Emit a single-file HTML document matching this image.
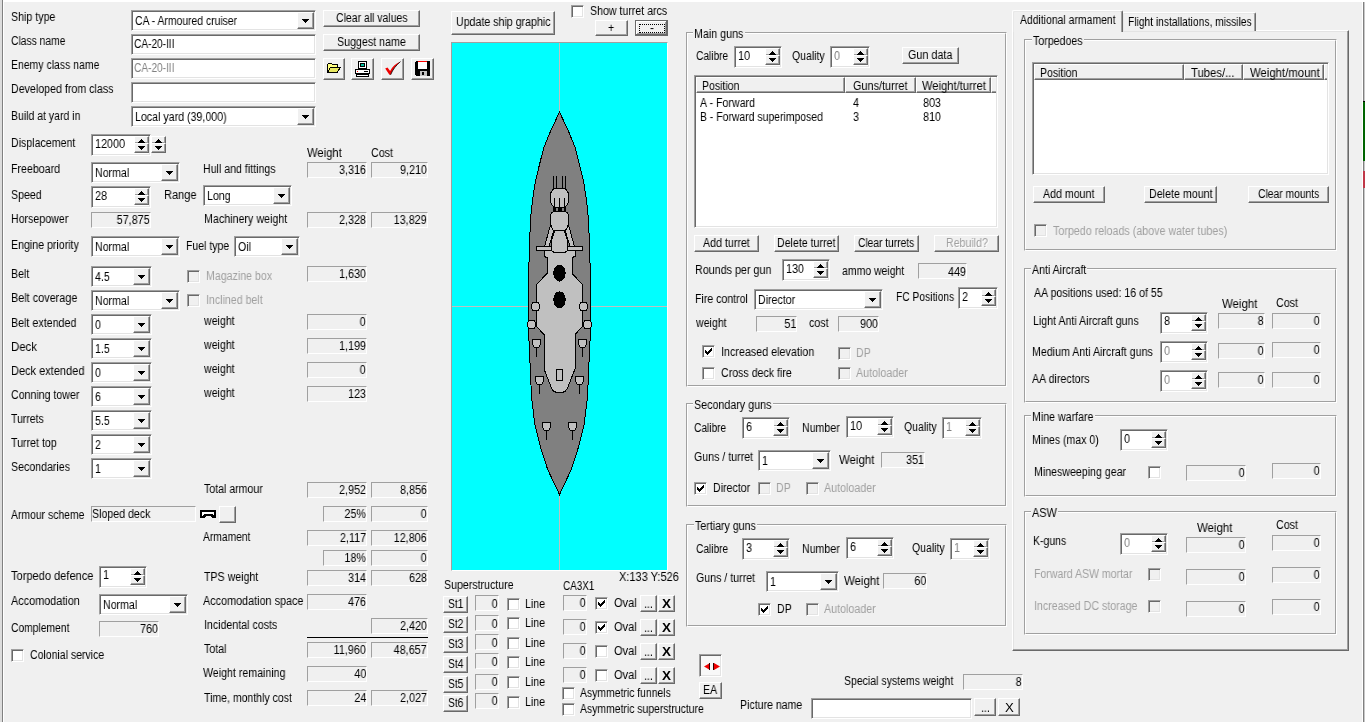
<!DOCTYPE html>
<html lang="en"><head><meta charset="utf-8"><title>Ship design</title><style>
html,body{margin:0;padding:0}
body{width:1365px;height:722px;overflow:hidden;background:#f0f0f0;position:relative;font:12px/12px "Liberation Sans",sans-serif;color:#000}
.t{position:absolute;z-index:3;will-change:transform;white-space:pre;font:12px/12px "Liberation Sans",sans-serif;height:12px}
.sk{position:absolute;border:1px solid;border-color:#a0a0a0 #fff #fff #a0a0a0;background:#f0f0f0;box-sizing:content-box}
.ed{position:absolute;border:1px solid;border-color:#a0a0a0 #fff #fff #a0a0a0;background:#fff;box-shadow:inset 1px 1px 0 #696969,inset -1px -1px 0 #e3e3e3}
.bt{position:absolute;border:1px solid;border-color:#fff #696969 #696969 #fff;background:#f0f0f0;box-shadow:inset -1px -1px 0 #a0a0a0}
.bf{outline:1px solid #696969;outline-offset:-1px;box-shadow:inset -1px -1px 0 #696969,inset 1px 1px 0 #fff,inset -2px -2px 0 #a0a0a0;border-color:#696969}
.dot{position:absolute;border:1px dotted #000}
.ic{position:absolute;display:block;line-height:0}
.gb{position:absolute;border:1px solid;border-color:#a0a0a0 #fff #fff #a0a0a0}
.gb>div{position:absolute;left:0;top:0;right:0;bottom:0;border:1px solid;border-color:#fff #a0a0a0 #a0a0a0 #fff}
.gl{position:absolute;background:#f0f0f0}
.tabpanel{position:absolute;border:1px solid;border-color:#fff #696969 #696969 #fff;box-shadow:inset -1px -1px 0 #a0a0a0,inset 1px 1px 0 #e3e3e3;background:#f0f0f0}
.tab{position:absolute;border:1px solid;border-color:#fff #696969 transparent #fff;border-bottom:0;box-shadow:inset -1px 0 0 #a0a0a0,inset 1px 1px 0 #e8e8e8;background:#f0f0f0;border-radius:2px 2px 0 0}
.tabsel{z-index:2}
</style></head>
<body>
<div style="position:absolute;left:0;top:0;width:1365px;height:2px;background:#fff"></div>
<div style="position:absolute;left:0;top:0;width:2px;height:722px;background:#dcdcdc"></div>
<div style="position:absolute;left:2px;top:0;width:1px;height:722px;background:#808080"></div>
<div style="position:absolute;left:3px;top:0;width:1px;height:722px;background:#fff"></div>
<div style="position:absolute;left:1362px;top:2px;width:1px;height:720px;background:#fff"></div>
<div style="position:absolute;left:1363px;top:2px;width:1px;height:720px;background:#808080"></div>
<div style="position:absolute;left:1364px;top:2px;width:1px;height:720px;background:#c8c8c8"></div>
<div style="position:absolute;left:1363px;top:101px;width:2px;height:60px;background:#006400;border-top:1px solid #000;box-sizing:border-box"></div>
<div style="position:absolute;left:1363px;top:171px;width:2px;height:17px;background:#c03848"></div>
<div class="t" style="top:11px;transform:scaleX(0.8877);left:11.4px;transform-origin:0 0;">Ship type</div>
<div class="t" style="top:35px;transform:scaleX(0.8586);left:11.4px;transform-origin:0 0;">Class name</div>
<div class="t" style="top:59px;transform:scaleX(0.8721);left:11.4px;transform-origin:0 0;">Enemy class name</div>
<div class="t" style="top:83px;transform:scaleX(0.8875);left:11.4px;transform-origin:0 0;">Developed from class</div>
<div class="t" style="top:110px;transform:scaleX(0.8745);left:11.4px;transform-origin:0 0;">Build at yard in</div>
<div class="ed" style="left:131px;top:10px;width:183px;height:19px"></div>
<div class="bt" style="left:297px;top:12px;width:15px;height:15px"></div>
<div class="ic" style="left:302px;top:19px"><svg width="7" height="4" viewBox="0 0 7 4" shape-rendering="crispEdges"><path d="M0 0h7v1h-1v1h-1v1h-1v1h-1v-1h-1v-1h-1v-1h-1z" fill="#000"/></svg></div>
<div class="t" style="top:15px;transform:scaleX(0.8649);left:135.2px;transform-origin:0 0;">CA - Armoured cruiser</div>
<div class="ed" style="left:131px;top:34px;width:183px;height:19px"></div>
<div class="t" style="top:38px;transform:scaleX(0.8417);left:134.4px;transform-origin:0 0;">CA-20-III</div>
<div class="ed" style="left:131px;top:58px;width:183px;height:19px"></div>
<div class="t" style="top:62px;transform:scaleX(0.8417);left:134.4px;transform-origin:0 0;color:#808080;">CA-20-III</div>
<div class="ed" style="left:131px;top:82px;width:183px;height:19px"></div>
<div class="ed" style="left:131px;top:106px;width:183px;height:19px"></div>
<div class="bt" style="left:297px;top:108px;width:15px;height:15px"></div>
<div class="ic" style="left:302px;top:115px"><svg width="7" height="4" viewBox="0 0 7 4" shape-rendering="crispEdges"><path d="M0 0h7v1h-1v1h-1v1h-1v1h-1v-1h-1v-1h-1v-1h-1z" fill="#000"/></svg></div>
<div class="t" style="top:111px;transform:scaleX(0.8861);left:135.2px;transform-origin:0 0;">Local yard (39,000)</div>
<div class="bt" style="left:323px;top:10px;width:95px;height:15px"></div>
<div class="t" style="top:12px;transform:scaleX(0.8727);left:335.7px;transform-origin:0 0;">Clear all values</div>
<div class="bt" style="left:323px;top:34px;width:95px;height:15px"></div>
<div class="t" style="top:36px;transform:scaleX(0.8894);left:337.1px;transform-origin:0 0;">Suggest name</div>
<div class="bt" style="left:323px;top:58px;width:20px;height:20px"></div>
<div class="bt" style="left:351px;top:58px;width:21px;height:20px"></div>
<div class="bt" style="left:381px;top:58px;width:21px;height:20px"></div>
<div class="bt" style="left:411px;top:58px;width:21px;height:20px"></div>
<svg class="ic" style="left:325px;top:62px" width="17" height="13" viewBox="0 0 17 13" shape-rendering="crispEdges">
<path d="M2.5 10.5v-8l1-1h3l1 1h4.5v2" fill="#ffff80" stroke="#000"/>
<path d="M2.5 10.5l3-5h10l-3.5 5z" fill="#e8e860" stroke="#000"/></svg>
<svg class="ic" style="left:354px;top:60px" width="18" height="18" viewBox="0 0 18 18" shape-rendering="crispEdges">
<rect x="4.5" y="1.5" width="8" height="7" fill="#fff" stroke="#000"/><rect x="6" y="3" width="5" height="4" fill="#000"/><rect x="7" y="4" width="3" height="2" fill="#00c0a0"/>
<rect x="1.5" y="9.500" width="14" height="4" fill="#fff" stroke="#000"/><rect x="3" y="11" width="1" height="1" fill="#f00"/><rect x="10" y="11" width="4" height="1" fill="#000"/>
<rect x="2.5" y="14.500" width="12" height="2" fill="#fff" stroke="#000"/></svg>
<svg class="ic" style="left:384px;top:61px" width="18" height="15" viewBox="0 0 18 15">
<path d="M1.2 7.4l2.3-.9 2.6 3.4C8.600 5.600 11.800 2.600 16.500 .6 12 4.400 8.800 8.400 6.600 13.800l-1.200 0z" fill="#f00000"/><path d="M6.600 13.800C8.800 8.400 12 4.400 16.500 .6" stroke="#000" stroke-width=".8" fill="none"/></svg>
<svg class="ic" style="left:415px;top:61px" width="15" height="15" viewBox="0 0 15 15" shape-rendering="crispEdges">
<path d="M1 0h13l1 1v13l-1 1h-13l-1-1v-13z" fill="#000"/><rect x="3" y="0" width="9" height="8" fill="#fff"/><rect x="3" y="0" width="9" height="1" fill="#f00"/>
<rect x="5" y="10" width="7" height="5" fill="#c0c0c0"/><rect x="7" y="11" width="2" height="3" fill="#000"/></svg>
<div class="t" style="top:137px;transform:scaleX(0.8850);left:11.4px;transform-origin:0 0;">Displacement</div>
<div class="ed" style="left:91px;top:134px;width:58px;height:20px"></div>
<div class="bt" style="left:134px;top:136px;width:13px;height:6px"></div>
<div class="bt" style="left:134px;top:143px;width:13px;height:8px"></div>
<div class="ic" style="left:138px;top:139px"><svg width="7" height="4" viewBox="0 0 7 4" shape-rendering="crispEdges"><path d="M3 0h1v1h1v1h1v1h1v1h-7v-1h1v-1h1v-1h1z" fill="#000"/></svg></div>
<div class="ic" style="left:138px;top:146px"><svg width="7" height="4" viewBox="0 0 7 4" shape-rendering="crispEdges"><path d="M0 0h7v1h-1v1h-1v1h-1v1h-1v-1h-1v-1h-1v-1h-1z" fill="#000"/></svg></div>
<div class="t" style="top:138px;transform:scaleX(0.9000);left:95px;transform-origin:0 0;">12000</div>
<div class="bt" style="left:151px;top:136px;width:13px;height:6px"></div>
<div class="bt" style="left:151px;top:143px;width:13px;height:8px"></div>
<div class="ic" style="left:155px;top:139px"><svg width="7" height="4" viewBox="0 0 7 4" shape-rendering="crispEdges"><path d="M3 0h1v1h1v1h1v1h1v1h-7v-1h1v-1h1v-1h1z" fill="#000"/></svg></div>
<div class="ic" style="left:155px;top:146px"><svg width="7" height="4" viewBox="0 0 7 4" shape-rendering="crispEdges"><path d="M0 0h7v1h-1v1h-1v1h-1v1h-1v-1h-1v-1h-1v-1h-1z" fill="#000"/></svg></div>
<div class="t" style="top:163px;transform:scaleX(0.8850);left:11.4px;transform-origin:0 0;">Freeboard</div>
<div class="ed" style="left:91px;top:162px;width:87px;height:19px"></div>
<div class="bt" style="left:161px;top:164px;width:15px;height:15px"></div>
<div class="ic" style="left:166px;top:171px"><svg width="7" height="4" viewBox="0 0 7 4" shape-rendering="crispEdges"><path d="M0 0h7v1h-1v1h-1v1h-1v1h-1v-1h-1v-1h-1v-1h-1z" fill="#000"/></svg></div>
<div class="t" style="top:167px;transform:scaleX(0.8850);left:95px;transform-origin:0 0;">Normal</div>
<div class="t" style="top:163px;transform:scaleX(0.8850);left:203.4px;transform-origin:0 0;">Hull and fittings</div>
<div class="t" style="top:147px;transform:scaleX(0.9374);left:307.4px;transform-origin:0 0;">Weight</div>
<div class="t" style="top:147px;transform:scaleX(0.8917);left:371.4px;transform-origin:0 0;">Cost</div>
<div class="sk" style="left:307px;top:162px;width:58px;height:14px"></div>
<div class="t" style="top:164px;transform:scaleX(0.9000);right:999px;transform-origin:100% 0;">3,316</div>
<div class="sk" style="left:371px;top:162px;width:55px;height:14px"></div>
<div class="t" style="top:164px;transform:scaleX(0.9000);right:938px;transform-origin:100% 0;">9,210</div>
<div class="t" style="top:189px;transform:scaleX(0.8850);left:11.4px;transform-origin:0 0;">Speed</div>
<div class="ed" style="left:91px;top:186px;width:58px;height:20px"></div>
<div class="bt" style="left:134px;top:188px;width:13px;height:6px"></div>
<div class="bt" style="left:134px;top:195px;width:13px;height:8px"></div>
<div class="ic" style="left:138px;top:191px"><svg width="7" height="4" viewBox="0 0 7 4" shape-rendering="crispEdges"><path d="M3 0h1v1h1v1h1v1h1v1h-7v-1h1v-1h1v-1h1z" fill="#000"/></svg></div>
<div class="ic" style="left:138px;top:198px"><svg width="7" height="4" viewBox="0 0 7 4" shape-rendering="crispEdges"><path d="M0 0h7v1h-1v1h-1v1h-1v1h-1v-1h-1v-1h-1v-1h-1z" fill="#000"/></svg></div>
<div class="t" style="top:190px;transform:scaleX(0.9000);left:95px;transform-origin:0 0;">28</div>
<div class="t" style="top:189px;transform:scaleX(0.9191);left:163.6px;transform-origin:0 0;">Range</div>
<div class="ed" style="left:203px;top:185px;width:87px;height:19px"></div>
<div class="bt" style="left:273px;top:187px;width:15px;height:15px"></div>
<div class="ic" style="left:278px;top:194px"><svg width="7" height="4" viewBox="0 0 7 4" shape-rendering="crispEdges"><path d="M0 0h7v1h-1v1h-1v1h-1v1h-1v-1h-1v-1h-1v-1h-1z" fill="#000"/></svg></div>
<div class="t" style="top:190px;transform:scaleX(0.8850);left:207px;transform-origin:0 0;">Long</div>
<div class="t" style="top:213px;transform:scaleX(0.8850);left:11.4px;transform-origin:0 0;">Horsepower</div>
<div class="sk" style="left:91px;top:212px;width:58px;height:14px"></div>
<div class="t" style="top:214px;transform:scaleX(0.9000);right:1215px;transform-origin:100% 0;">57,875</div>
<div class="t" style="top:213px;transform:scaleX(0.8921);left:203.7px;transform-origin:0 0;">Machinery weight</div>
<div class="sk" style="left:307px;top:212px;width:58px;height:14px"></div>
<div class="t" style="top:214px;transform:scaleX(0.9000);right:999px;transform-origin:100% 0;">2,328</div>
<div class="sk" style="left:371px;top:212px;width:55px;height:14px"></div>
<div class="t" style="top:214px;transform:scaleX(0.9000);right:938px;transform-origin:100% 0;">13,829</div>
<div class="t" style="top:239px;transform:scaleX(0.8850);left:11.4px;transform-origin:0 0;">Engine priority</div>
<div class="ed" style="left:91px;top:236px;width:87px;height:19px"></div>
<div class="bt" style="left:161px;top:238px;width:15px;height:15px"></div>
<div class="ic" style="left:166px;top:245px"><svg width="7" height="4" viewBox="0 0 7 4" shape-rendering="crispEdges"><path d="M0 0h7v1h-1v1h-1v1h-1v1h-1v-1h-1v-1h-1v-1h-1z" fill="#000"/></svg></div>
<div class="t" style="top:241px;transform:scaleX(0.8850);left:95px;transform-origin:0 0;">Normal</div>
<div class="t" style="top:240px;transform:scaleX(0.8735);left:186.4px;transform-origin:0 0;">Fuel type</div>
<div class="ed" style="left:234px;top:236px;width:64px;height:19px"></div>
<div class="bt" style="left:281px;top:238px;width:15px;height:15px"></div>
<div class="ic" style="left:286px;top:245px"><svg width="7" height="4" viewBox="0 0 7 4" shape-rendering="crispEdges"><path d="M0 0h7v1h-1v1h-1v1h-1v1h-1v-1h-1v-1h-1v-1h-1z" fill="#000"/></svg></div>
<div class="t" style="top:241px;transform:scaleX(0.8850);left:238px;transform-origin:0 0;">Oil</div>
<div class="t" style="top:268px;transform:scaleX(0.8850);left:11.4px;transform-origin:0 0;">Belt</div>
<div class="ed" style="left:91px;top:266px;width:59px;height:19px"></div>
<div class="bt" style="left:133px;top:268px;width:15px;height:15px"></div>
<div class="ic" style="left:138px;top:275px"><svg width="7" height="4" viewBox="0 0 7 4" shape-rendering="crispEdges"><path d="M0 0h7v1h-1v1h-1v1h-1v1h-1v-1h-1v-1h-1v-1h-1z" fill="#000"/></svg></div>
<div class="t" style="top:271px;transform:scaleX(0.8850);left:95px;transform-origin:0 0;">4.5</div>
<div class="t" style="top:292px;transform:scaleX(0.9051);left:11.4px;transform-origin:0 0;">Belt coverage</div>
<div class="ed" style="left:91px;top:290px;width:87px;height:19px"></div>
<div class="bt" style="left:161px;top:292px;width:15px;height:15px"></div>
<div class="ic" style="left:166px;top:299px"><svg width="7" height="4" viewBox="0 0 7 4" shape-rendering="crispEdges"><path d="M0 0h7v1h-1v1h-1v1h-1v1h-1v-1h-1v-1h-1v-1h-1z" fill="#000"/></svg></div>
<div class="t" style="top:295px;transform:scaleX(0.8850);left:95px;transform-origin:0 0;">Normal</div>
<div class="t" style="top:317px;transform:scaleX(0.8915);left:11.4px;transform-origin:0 0;">Belt extended</div>
<div class="ed" style="left:91px;top:314px;width:59px;height:19px"></div>
<div class="bt" style="left:133px;top:316px;width:15px;height:15px"></div>
<div class="ic" style="left:138px;top:323px"><svg width="7" height="4" viewBox="0 0 7 4" shape-rendering="crispEdges"><path d="M0 0h7v1h-1v1h-1v1h-1v1h-1v-1h-1v-1h-1v-1h-1z" fill="#000"/></svg></div>
<div class="t" style="top:319px;transform:scaleX(0.8850);left:95px;transform-origin:0 0;">0</div>
<div class="t" style="top:341px;transform:scaleX(0.9509);left:11.4px;transform-origin:0 0;">Deck</div>
<div class="ed" style="left:91px;top:338px;width:59px;height:19px"></div>
<div class="bt" style="left:133px;top:340px;width:15px;height:15px"></div>
<div class="ic" style="left:138px;top:347px"><svg width="7" height="4" viewBox="0 0 7 4" shape-rendering="crispEdges"><path d="M0 0h7v1h-1v1h-1v1h-1v1h-1v-1h-1v-1h-1v-1h-1z" fill="#000"/></svg></div>
<div class="t" style="top:343px;transform:scaleX(0.8850);left:95px;transform-origin:0 0;">1.5</div>
<div class="t" style="top:365px;transform:scaleX(0.9171);left:11.4px;transform-origin:0 0;">Deck extended</div>
<div class="ed" style="left:91px;top:362px;width:59px;height:19px"></div>
<div class="bt" style="left:133px;top:364px;width:15px;height:15px"></div>
<div class="ic" style="left:138px;top:371px"><svg width="7" height="4" viewBox="0 0 7 4" shape-rendering="crispEdges"><path d="M0 0h7v1h-1v1h-1v1h-1v1h-1v-1h-1v-1h-1v-1h-1z" fill="#000"/></svg></div>
<div class="t" style="top:367px;transform:scaleX(0.8850);left:95px;transform-origin:0 0;">0</div>
<div class="t" style="top:389px;transform:scaleX(0.8840);left:11.4px;transform-origin:0 0;">Conning tower</div>
<div class="ed" style="left:91px;top:386px;width:59px;height:19px"></div>
<div class="bt" style="left:133px;top:388px;width:15px;height:15px"></div>
<div class="ic" style="left:138px;top:395px"><svg width="7" height="4" viewBox="0 0 7 4" shape-rendering="crispEdges"><path d="M0 0h7v1h-1v1h-1v1h-1v1h-1v-1h-1v-1h-1v-1h-1z" fill="#000"/></svg></div>
<div class="t" style="top:391px;transform:scaleX(0.8850);left:95px;transform-origin:0 0;">6</div>
<div class="t" style="top:413px;transform:scaleX(0.8732);left:11.4px;transform-origin:0 0;">Turrets</div>
<div class="ed" style="left:91px;top:410px;width:59px;height:19px"></div>
<div class="bt" style="left:133px;top:412px;width:15px;height:15px"></div>
<div class="ic" style="left:138px;top:419px"><svg width="7" height="4" viewBox="0 0 7 4" shape-rendering="crispEdges"><path d="M0 0h7v1h-1v1h-1v1h-1v1h-1v-1h-1v-1h-1v-1h-1z" fill="#000"/></svg></div>
<div class="t" style="top:415px;transform:scaleX(0.8850);left:95px;transform-origin:0 0;">5.5</div>
<div class="t" style="top:437px;transform:scaleX(0.8850);left:11.4px;transform-origin:0 0;">Turret top</div>
<div class="ed" style="left:91px;top:434px;width:59px;height:19px"></div>
<div class="bt" style="left:133px;top:436px;width:15px;height:15px"></div>
<div class="ic" style="left:138px;top:443px"><svg width="7" height="4" viewBox="0 0 7 4" shape-rendering="crispEdges"><path d="M0 0h7v1h-1v1h-1v1h-1v1h-1v-1h-1v-1h-1v-1h-1z" fill="#000"/></svg></div>
<div class="t" style="top:439px;transform:scaleX(0.8850);left:95px;transform-origin:0 0;">2</div>
<div class="t" style="top:461px;transform:scaleX(0.8850);left:11.4px;transform-origin:0 0;">Secondaries</div>
<div class="ed" style="left:91px;top:458px;width:59px;height:19px"></div>
<div class="bt" style="left:133px;top:460px;width:15px;height:15px"></div>
<div class="ic" style="left:138px;top:467px"><svg width="7" height="4" viewBox="0 0 7 4" shape-rendering="crispEdges"><path d="M0 0h7v1h-1v1h-1v1h-1v1h-1v-1h-1v-1h-1v-1h-1z" fill="#000"/></svg></div>
<div class="t" style="top:463px;transform:scaleX(0.8850);left:95px;transform-origin:0 0;">1</div>
<div class="ed" style="left:187px;top:270px;width:11px;height:11px;background:#f0f0f0"></div>
<div class="t" style="top:270px;transform:scaleX(0.8850);left:205.6px;transform-origin:0 0;color:#a0a0a0;">Magazine box</div>
<div class="ed" style="left:187px;top:294px;width:11px;height:11px;background:#f0f0f0"></div>
<div class="t" style="top:294px;transform:scaleX(0.8850);left:205.6px;transform-origin:0 0;color:#a0a0a0;">Inclined belt</div>
<div class="sk" style="left:307px;top:266px;width:58px;height:14px"></div>
<div class="t" style="top:268px;transform:scaleX(0.9000);right:999px;transform-origin:100% 0;">1,630</div>
<div class="t" style="top:315px;transform:scaleX(0.8850);left:203.6px;transform-origin:0 0;">weight</div>
<div class="sk" style="left:307px;top:314px;width:58px;height:14px"></div>
<div class="t" style="top:316px;transform:scaleX(0.9000);right:999px;transform-origin:100% 0;">0</div>
<div class="t" style="top:339px;transform:scaleX(0.8850);left:203.6px;transform-origin:0 0;">weight</div>
<div class="sk" style="left:307px;top:338px;width:58px;height:14px"></div>
<div class="t" style="top:340px;transform:scaleX(0.9000);right:999px;transform-origin:100% 0;">1,199</div>
<div class="t" style="top:363px;transform:scaleX(0.8850);left:203.6px;transform-origin:0 0;">weight</div>
<div class="sk" style="left:307px;top:362px;width:58px;height:14px"></div>
<div class="t" style="top:364px;transform:scaleX(0.9000);right:999px;transform-origin:100% 0;">0</div>
<div class="t" style="top:387px;transform:scaleX(0.8850);left:203.6px;transform-origin:0 0;">weight</div>
<div class="sk" style="left:307px;top:386px;width:58px;height:14px"></div>
<div class="t" style="top:388px;transform:scaleX(0.9000);right:999px;transform-origin:100% 0;">123</div>
<div class="t" style="top:483px;transform:scaleX(0.8817);left:204px;transform-origin:0 0;">Total armour</div>
<div class="sk" style="left:307px;top:482px;width:58px;height:14px"></div>
<div class="t" style="top:484px;transform:scaleX(0.9000);right:999px;transform-origin:100% 0;">2,952</div>
<div class="sk" style="left:371px;top:482px;width:55px;height:14px"></div>
<div class="t" style="top:484px;transform:scaleX(0.9000);right:938px;transform-origin:100% 0;">8,856</div>
<div class="t" style="top:509px;transform:scaleX(0.8667);left:11.4px;transform-origin:0 0;">Armour scheme</div>
<div class="sk" style="left:91px;top:506px;width:103px;height:14px"></div>
<div class="t" style="top:508px;transform:scaleX(0.8850);left:92.4px;transform-origin:0 0;">Sloped deck</div>
<svg class="ic" style="left:200px;top:510px" width="16" height="8" viewBox="0 0 16 8" shape-rendering="crispEdges"><path d="M0 0h16v8h-4l-2-2h-4l-2 2h-4z" fill="#000"/><path d="M2 2h12v4l-2-2h-8l-2 2z" fill="#fff"/></svg>
<div class="bt" style="left:219px;top:506px;width:15px;height:15px"></div>
<div class="sk" style="left:323px;top:506px;width:42px;height:14px"></div>
<div class="t" style="top:508px;transform:scaleX(0.9000);right:999px;transform-origin:100% 0;">25%</div>
<div class="sk" style="left:371px;top:506px;width:55px;height:14px"></div>
<div class="t" style="top:508px;transform:scaleX(0.9000);right:938px;transform-origin:100% 0;">0</div>
<div class="t" style="top:531px;transform:scaleX(0.8565);left:203.4px;transform-origin:0 0;">Armament</div>
<div class="sk" style="left:307px;top:530px;width:58px;height:14px"></div>
<div class="t" style="top:532px;transform:scaleX(0.9000);right:999px;transform-origin:100% 0;">2,117</div>
<div class="sk" style="left:371px;top:530px;width:55px;height:14px"></div>
<div class="t" style="top:532px;transform:scaleX(0.9000);right:938px;transform-origin:100% 0;">12,806</div>
<div class="sk" style="left:323px;top:550px;width:42px;height:14px"></div>
<div class="t" style="top:552px;transform:scaleX(0.9000);right:999px;transform-origin:100% 0;">18%</div>
<div class="sk" style="left:371px;top:550px;width:55px;height:14px"></div>
<div class="t" style="top:552px;transform:scaleX(0.9000);right:938px;transform-origin:100% 0;">0</div>
<div class="t" style="top:571px;transform:scaleX(0.8850);left:204px;transform-origin:0 0;">TPS weight</div>
<div class="sk" style="left:307px;top:570px;width:58px;height:14px"></div>
<div class="t" style="top:572px;transform:scaleX(0.9000);right:999px;transform-origin:100% 0;">314</div>
<div class="sk" style="left:371px;top:570px;width:55px;height:14px"></div>
<div class="t" style="top:572px;transform:scaleX(0.9000);right:938px;transform-origin:100% 0;">628</div>
<div class="t" style="top:595px;transform:scaleX(0.9015);left:203.4px;transform-origin:0 0;">Accomodation space</div>
<div class="sk" style="left:307px;top:594px;width:58px;height:14px"></div>
<div class="t" style="top:596px;transform:scaleX(0.9000);right:999px;transform-origin:100% 0;">476</div>
<div class="t" style="top:619px;transform:scaleX(0.8850);left:204px;transform-origin:0 0;">Incidental costs</div>
<div class="sk" style="left:371px;top:618px;width:55px;height:14px"></div>
<div class="t" style="top:620px;transform:scaleX(0.9000);right:938px;transform-origin:100% 0;">2,420</div>
<div style="position:absolute;left:307px;top:637px;width:121px;height:1px;background:#000"></div>
<div class="t" style="top:643px;transform:scaleX(0.8850);left:204px;transform-origin:0 0;">Total</div>
<div class="sk" style="left:307px;top:642px;width:58px;height:14px"></div>
<div class="t" style="top:644px;transform:scaleX(0.9000);right:999px;transform-origin:100% 0;">11,960</div>
<div class="sk" style="left:371px;top:642px;width:55px;height:14px"></div>
<div class="t" style="top:644px;transform:scaleX(0.9000);right:938px;transform-origin:100% 0;">48,657</div>
<div class="t" style="top:667px;transform:scaleX(0.8850);left:203.4px;transform-origin:0 0;">Weight remaining</div>
<div class="sk" style="left:307px;top:666px;width:58px;height:14px"></div>
<div class="t" style="top:668px;transform:scaleX(0.9000);right:999px;transform-origin:100% 0;">40</div>
<div class="t" style="top:692px;transform:scaleX(0.8759);left:204px;transform-origin:0 0;">Time, monthly cost</div>
<div class="sk" style="left:307px;top:690px;width:58px;height:14px"></div>
<div class="t" style="top:692px;transform:scaleX(0.9000);right:999px;transform-origin:100% 0;">24</div>
<div class="sk" style="left:371px;top:690px;width:55px;height:14px"></div>
<div class="t" style="top:692px;transform:scaleX(0.9000);right:938px;transform-origin:100% 0;">2,027</div>
<div class="t" style="top:570px;transform:scaleX(0.9220);left:11.4px;transform-origin:0 0;">Torpedo defence</div>
<div class="ed" style="left:99px;top:566px;width:46px;height:20px"></div>
<div class="bt" style="left:130px;top:568px;width:13px;height:6px"></div>
<div class="bt" style="left:130px;top:575px;width:13px;height:8px"></div>
<div class="ic" style="left:134px;top:571px"><svg width="7" height="4" viewBox="0 0 7 4" shape-rendering="crispEdges"><path d="M3 0h1v1h1v1h1v1h1v1h-7v-1h1v-1h1v-1h1z" fill="#000"/></svg></div>
<div class="ic" style="left:134px;top:578px"><svg width="7" height="4" viewBox="0 0 7 4" shape-rendering="crispEdges"><path d="M0 0h7v1h-1v1h-1v1h-1v1h-1v-1h-1v-1h-1v-1h-1z" fill="#000"/></svg></div>
<div class="t" style="top:569px;transform:scaleX(0.9000);left:103px;transform-origin:0 0;">1</div>
<div class="t" style="top:595px;transform:scaleX(0.9049);left:11.4px;transform-origin:0 0;">Accomodation</div>
<div class="ed" style="left:99px;top:594px;width:87px;height:19px"></div>
<div class="bt" style="left:169px;top:596px;width:15px;height:15px"></div>
<div class="ic" style="left:174px;top:603px"><svg width="7" height="4" viewBox="0 0 7 4" shape-rendering="crispEdges"><path d="M0 0h7v1h-1v1h-1v1h-1v1h-1v-1h-1v-1h-1v-1h-1z" fill="#000"/></svg></div>
<div class="t" style="top:599px;transform:scaleX(0.8850);left:103px;transform-origin:0 0;">Normal</div>
<div class="t" style="top:622px;transform:scaleX(0.8584);left:11.4px;transform-origin:0 0;">Complement</div>
<div class="sk" style="left:99px;top:621px;width:58px;height:14px"></div>
<div class="t" style="top:623px;transform:scaleX(0.9000);right:1207px;transform-origin:100% 0;">760</div>
<div class="ed" style="left:11px;top:649px;width:11px;height:11px;background:#fff"></div>
<div class="t" style="top:649px;transform:scaleX(0.8758);left:29.6px;transform-origin:0 0;">Colonial service</div>
<div class="bt" style="left:451px;top:11px;width:102px;height:22px"></div>
<div class="t" style="top:16px;transform:scaleX(0.8850);left:455.776953125px;transform-origin:0 0;">Update ship graphic</div>
<div class="ed" style="left:571px;top:5px;width:11px;height:11px;background:#fff"></div>
<div class="t" style="top:5px;transform:scaleX(0.8839);left:589.6px;transform-origin:0 0;">Show turret arcs</div>
<div class="bt" style="left:595px;top:20px;width:31px;height:14px"></div>
<div class="t" style="top:22px;transform:scaleX(0.8850);left:608.3955859375px;transform-origin:0 0;">+</div>
<div class="bt bf" style="left:635px;top:20px;width:31px;height:14px"></div>
<div class="t" style="top:22px;transform:scaleX(0.8850);left:649.73px;transform-origin:0 0;">-</div>
<div class="dot" style="left:639px;top:24px;width:24px;height:7px"></div>
<div class="sk" style="left:451px;top:42px;width:215px;height:527px;background:#0ff"></div>
<svg class="ic" style="left:451px;top:42px" width="217" height="529" viewBox="0 0 217 529" shape-rendering="crispEdges">
<line x1="108.5" y1="1" x2="108.5" y2="528" stroke="#c0c0c0"/><line x1="1" y1="264.500" x2="216" y2="264.500" stroke="#c0c0c0"/>
<polygon points="108.5,70.0 99.2,90.0 92.7,106.0 88.5,122.5 84.6,138.6 82.0,154.7 80.1,170.8 78.6,198.0 77.5,239.0 77.5,288.0 78.9,318.0 80.5,354.6 83.9,383.0 89.5,405.0 96.6,427.3 108.5,452.5 120.4,427.3 127.5,405.0 133.1,383.0 136.5,354.6 138.1,318.0 139.5,288.0 139.5,239.0 138.4,198.0 136.9,170.8 135.0,154.7 132.4,138.6 128.5,122.5 124.3,106.0 117.8,90.0" fill="#808080" stroke="#000" stroke-width="1"/>
<polygon points="93.0,208.0 93.0,214.5 96.0,215.5 96.0,231.5 85.5,242.5 85.5,284.5 93.0,292.5 93.0,327.0 101.5,348.5 105.5,350.5 111.5,350.5 115.5,348.5 124.0,327.0 124.0,292.5 131.5,284.5 131.5,242.5 121.0,231.5 121.0,215.5 124.0,214.5 124.0,208.0" fill="#c0c0c0" stroke="#000"/>
<polygon points="99.5,183.0 93.5,204.5 98.0,204.5 103.0,188.0" fill="#c0c0c0" stroke="#000"/>
<polygon points="117.5,183.0 123.5,204.5 119.0,204.5 114.0,188.0" fill="#c0c0c0" stroke="#000"/>
<rect x="85.5" y="204.5" width="46.0" height="4.0" rx="0" fill="#c0c0c0" stroke="#000"/>
<polygon points="104.5,188.0 102.5,192.0 100.5,198.0 100.5,208.5 103.0,210.5 114.0,210.5 116.5,208.5 116.5,198.0 114.5,192.0 112.5,188.0" fill="#c0c0c0" stroke="#000"/>
<polygon points="102.5,169.5 100.5,171.0 99.5,173.5 99.5,181.0 100.5,185.0 102.5,188.5 114.5,188.5 116.5,185.0 117.5,181.0 117.5,173.5 116.5,171.0 114.5,169.5" fill="#c0c0c0" stroke="#000"/>
<rect x="102.5" y="164.5" width="12.0" height="5.0" rx="0" fill="#000" stroke="#000"/>
<rect x="104.5" y="166.0" width="2.5" height="3.0" rx="0" fill="#808080" stroke="none"/>
<rect x="110.5" y="166.0" width="2.5" height="3.0" rx="0" fill="#808080" stroke="none"/>
<line x1="102.5" y1="134.0" x2="102.5" y2="149.0" stroke="#000" stroke-width="1"/>
<line x1="105.5" y1="134.0" x2="105.5" y2="149.0" stroke="#000" stroke-width="1"/>
<line x1="111.5" y1="134.0" x2="111.5" y2="149.0" stroke="#000" stroke-width="1"/>
<line x1="114.5" y1="134.0" x2="114.5" y2="149.0" stroke="#000" stroke-width="1"/>
<polygon points="104.0,146.5 101.5,148.0 99.5,151.5 99.5,160.0 101.0,163.0 102.5,165.0 114.5,165.0 116.0,163.0 117.5,160.0 117.5,151.5 115.5,148.0 113.0,146.5" fill="#c0c0c0" stroke="#000"/>
<line x1="103.5" y1="156.0" x2="103.5" y2="165.0" stroke="#000" stroke-width="1"/>
<line x1="108.5" y1="156.0" x2="108.5" y2="165.0" stroke="#000" stroke-width="1"/>
<line x1="113.5" y1="156.0" x2="113.5" y2="165.0" stroke="#000" stroke-width="1"/>
<ellipse cx="108.5" cy="231.0" rx="5.7" ry="8" fill="#000" stroke="#000"/>
<ellipse cx="108.5" cy="257.8" rx="5.7" ry="8" fill="#000" stroke="#000"/>
<rect x="105.5" y="327.5" width="6.0" height="11.0" rx="0" fill="#c0c0c0" stroke="#000"/>
<polygon points="82.0,260.5 87.0,260.5 88.5,262.5 88.5,266.5 87.0,268.5 82.0,268.5 80.5,266.5 80.5,262.5" fill="#c0c0c0" stroke="#000"/>
<polygon points="130.0,260.5 135.0,260.5 136.5,262.5 136.5,266.5 135.0,268.5 130.0,268.5 128.5,266.5 128.5,262.5" fill="#c0c0c0" stroke="#000"/>
<polygon points="78.0,278.5 83.0,278.5 84.5,280.5 84.5,284.5 83.0,286.5 78.0,286.5 76.5,284.5 76.5,280.5" fill="#c0c0c0" stroke="#000"/>
<polygon points="134.0,278.5 139.0,278.5 140.5,280.5 140.5,284.5 139.0,286.5 134.0,286.5 132.5,284.5 132.5,280.5" fill="#c0c0c0" stroke="#000"/>
<polygon points="81.5,297.5 89.5,297.5 89.5,302.5 87.5,305.5 83.5,305.5 81.5,302.5" fill="#c0c0c0" stroke="#000"/>
<line x1="85.5" y1="305.5" x2="85.5" y2="315.0" stroke="#000" stroke-width="1"/>
<polygon points="127.5,297.5 135.5,297.5 135.5,302.5 133.5,305.5 129.5,305.5 127.5,302.5" fill="#c0c0c0" stroke="#000"/>
<line x1="131.5" y1="305.5" x2="131.5" y2="315.0" stroke="#000" stroke-width="1"/>
<polygon points="84.5,334.5 92.5,334.5 92.5,339.5 90.5,342.5 86.5,342.5 84.5,339.5" fill="#c0c0c0" stroke="#000"/>
<line x1="88.5" y1="342.5" x2="88.5" y2="352.0" stroke="#000" stroke-width="1"/>
<polygon points="124.5,334.5 132.5,334.5 132.5,339.5 130.5,342.5 126.5,342.5 124.5,339.5" fill="#c0c0c0" stroke="#000"/>
<line x1="128.5" y1="342.5" x2="128.5" y2="352.0" stroke="#000" stroke-width="1"/>
<polygon points="91.5,380.5 99.5,380.5 99.5,385.5 97.5,388.5 93.5,388.5 91.5,385.5" fill="#c0c0c0" stroke="#000"/>
<line x1="95.5" y1="388.5" x2="95.5" y2="398.0" stroke="#000" stroke-width="1"/>
<polygon points="117.5,380.5 125.5,380.5 125.5,385.5 123.5,388.5 119.5,388.5 117.5,385.5" fill="#c0c0c0" stroke="#000"/>
<line x1="121.5" y1="388.5" x2="121.5" y2="398.0" stroke="#000" stroke-width="1"/>
</svg>
<div class="t" style="top:571px;transform:scaleX(0.9180);left:619px;transform-origin:0 0;">X:133 Y:526</div>
<div class="t" style="top:579px;transform:scaleX(0.8850);left:443.6px;transform-origin:0 0;">Superstructure</div>
<div class="t" style="top:580px;transform:scaleX(0.8260);left:563px;transform-origin:0 0;">CA3X1</div>
<div class="bt" style="left:443px;top:596px;width:23px;height:15px"></div>
<div class="t" style="top:598px;transform:scaleX(0.8556);left:447.8px;transform-origin:0 0;">St1</div>
<div class="sk" style="left:475px;top:595px;width:22px;height:14px"></div>
<div class="t" style="top:598px;transform:scaleX(0.9000);right:867px;transform-origin:100% 0;">0</div>
<div class="ed" style="left:507px;top:598px;width:11px;height:11px;background:#fff"></div>
<div class="t" style="top:598px;transform:scaleX(0.8850);left:525.4px;transform-origin:0 0;">Line</div>
<div class="bt" style="left:443px;top:616px;width:23px;height:15px"></div>
<div class="t" style="top:618px;transform:scaleX(0.8556);left:447.8px;transform-origin:0 0;">St2</div>
<div class="sk" style="left:475px;top:615px;width:22px;height:14px"></div>
<div class="t" style="top:618px;transform:scaleX(0.9000);right:867px;transform-origin:100% 0;">0</div>
<div class="ed" style="left:507px;top:617px;width:11px;height:11px;background:#fff"></div>
<div class="t" style="top:617px;transform:scaleX(0.8850);left:525.4px;transform-origin:0 0;">Line</div>
<div class="bt" style="left:443px;top:636px;width:23px;height:15px"></div>
<div class="t" style="top:638px;transform:scaleX(0.8556);left:447.8px;transform-origin:0 0;">St3</div>
<div class="sk" style="left:475px;top:634px;width:22px;height:14px"></div>
<div class="t" style="top:637px;transform:scaleX(0.9000);right:867px;transform-origin:100% 0;">0</div>
<div class="ed" style="left:507px;top:637px;width:11px;height:11px;background:#fff"></div>
<div class="t" style="top:637px;transform:scaleX(0.8850);left:525.4px;transform-origin:0 0;">Line</div>
<div class="bt" style="left:443px;top:656px;width:23px;height:15px"></div>
<div class="t" style="top:658px;transform:scaleX(0.8556);left:447.8px;transform-origin:0 0;">St4</div>
<div class="sk" style="left:475px;top:653px;width:22px;height:14px"></div>
<div class="t" style="top:656px;transform:scaleX(0.9000);right:867px;transform-origin:100% 0;">0</div>
<div class="ed" style="left:507px;top:656px;width:11px;height:11px;background:#fff"></div>
<div class="t" style="top:656px;transform:scaleX(0.8850);left:525.4px;transform-origin:0 0;">Line</div>
<div class="bt" style="left:443px;top:676px;width:23px;height:15px"></div>
<div class="t" style="top:678px;transform:scaleX(0.8556);left:447.8px;transform-origin:0 0;">St5</div>
<div class="sk" style="left:475px;top:674px;width:22px;height:14px"></div>
<div class="t" style="top:676px;transform:scaleX(0.9000);right:867px;transform-origin:100% 0;">0</div>
<div class="ed" style="left:507px;top:676px;width:11px;height:11px;background:#fff"></div>
<div class="t" style="top:676px;transform:scaleX(0.8850);left:525.4px;transform-origin:0 0;">Line</div>
<div class="bt" style="left:443px;top:695px;width:23px;height:15px"></div>
<div class="t" style="top:697px;transform:scaleX(0.8556);left:447.8px;transform-origin:0 0;">St6</div>
<div class="sk" style="left:475px;top:693px;width:22px;height:14px"></div>
<div class="t" style="top:695px;transform:scaleX(0.9000);right:867px;transform-origin:100% 0;">0</div>
<div class="ed" style="left:507px;top:696px;width:11px;height:11px;background:#fff"></div>
<div class="t" style="top:696px;transform:scaleX(0.8850);left:525.4px;transform-origin:0 0;">Line</div>
<div class="sk" style="left:563px;top:595px;width:22px;height:14px"></div>
<div class="t" style="top:597px;transform:scaleX(0.9000);right:779px;transform-origin:100% 0;">0</div>
<div class="ed" style="left:595px;top:597px;width:11px;height:11px;background:#fff"></div>
<div class="ic" style="left:598px;top:600px"><svg width="7" height="7" viewBox="0 0 7 7" shape-rendering="crispEdges"><path d="M0 2h1v1h1v1h1v-1h1v-1h1v-1h1v-1h1v3h-1v1h-1v1h-1v1h-1v1h-1v-1h-1v-1h-1z" fill="#000"/></svg></div>
<div class="t" style="top:597px;transform:scaleX(0.9241);left:613.6px;transform-origin:0 0;">Oval</div>
<div class="bt" style="left:640px;top:595px;width:15px;height:15px"></div>
<div class="t" style="top:598px;transform:scaleX(0.8850);left:644.0819140625px;transform-origin:0 0;">...</div>
<div class="bt" style="left:658px;top:595px;width:15px;height:15px"></div>
<div class="t" style="top:598px;transform:scaleX(1.1250);left:662.0px;transform-origin:0 0;font-weight:bold;">X</div>
<div class="sk" style="left:563px;top:619px;width:22px;height:14px"></div>
<div class="t" style="top:621px;transform:scaleX(0.9000);right:779px;transform-origin:100% 0;">0</div>
<div class="ed" style="left:595px;top:621px;width:11px;height:11px;background:#fff"></div>
<div class="ic" style="left:598px;top:624px"><svg width="7" height="7" viewBox="0 0 7 7" shape-rendering="crispEdges"><path d="M0 2h1v1h1v1h1v-1h1v-1h1v-1h1v-1h1v3h-1v1h-1v1h-1v1h-1v1h-1v-1h-1v-1h-1z" fill="#000"/></svg></div>
<div class="t" style="top:621px;transform:scaleX(0.9241);left:613.6px;transform-origin:0 0;">Oval</div>
<div class="bt" style="left:640px;top:619px;width:15px;height:15px"></div>
<div class="t" style="top:622px;transform:scaleX(0.8850);left:644.0819140625px;transform-origin:0 0;">...</div>
<div class="bt" style="left:658px;top:619px;width:15px;height:15px"></div>
<div class="t" style="top:622px;transform:scaleX(1.1250);left:662.0px;transform-origin:0 0;font-weight:bold;">X</div>
<div class="sk" style="left:563px;top:643px;width:22px;height:14px"></div>
<div class="t" style="top:645px;transform:scaleX(0.9000);right:779px;transform-origin:100% 0;">0</div>
<div class="ed" style="left:595px;top:645px;width:11px;height:11px;background:#fff"></div>
<div class="t" style="top:645px;transform:scaleX(0.9241);left:613.6px;transform-origin:0 0;">Oval</div>
<div class="bt" style="left:640px;top:643px;width:15px;height:15px"></div>
<div class="t" style="top:646px;transform:scaleX(0.8850);left:644.0819140625px;transform-origin:0 0;">...</div>
<div class="bt" style="left:658px;top:643px;width:15px;height:15px"></div>
<div class="t" style="top:646px;transform:scaleX(1.1250);left:662.0px;transform-origin:0 0;font-weight:bold;">X</div>
<div class="sk" style="left:563px;top:667px;width:22px;height:14px"></div>
<div class="t" style="top:669px;transform:scaleX(0.9000);right:779px;transform-origin:100% 0;">0</div>
<div class="ed" style="left:595px;top:669px;width:11px;height:11px;background:#fff"></div>
<div class="t" style="top:669px;transform:scaleX(0.9241);left:613.6px;transform-origin:0 0;">Oval</div>
<div class="bt" style="left:640px;top:667px;width:15px;height:15px"></div>
<div class="t" style="top:670px;transform:scaleX(0.8850);left:644.0819140625px;transform-origin:0 0;">...</div>
<div class="bt" style="left:658px;top:667px;width:15px;height:15px"></div>
<div class="t" style="top:670px;transform:scaleX(1.1250);left:662.0px;transform-origin:0 0;font-weight:bold;">X</div>
<div class="ed" style="left:562px;top:687px;width:11px;height:11px;background:#fff"></div>
<div class="t" style="top:687px;transform:scaleX(0.8673);left:580px;transform-origin:0 0;">Asymmetric funnels</div>
<div class="ed" style="left:562px;top:703px;width:11px;height:11px;background:#fff"></div>
<div class="t" style="top:703px;transform:scaleX(0.8676);left:580px;transform-origin:0 0;">Asymmetric superstructure</div>
<div class="ed" style="left:699px;top:654px;width:21px;height:21px;background:#f8f8f8"></div>
<svg class="ic" style="left:704px;top:663px" width="16" height="7" viewBox="0 0 16 7"><path d="M0 3.500L6 0v7z M16 3.500L10 0v7z" fill="#f00000"/><path d="M5.500 0v7M9.500 0v7" stroke="#300" stroke-width="1"/></svg>
<div class="bt" style="left:699px;top:682px;width:21px;height:15px"></div>
<div class="t" style="top:684px;transform:scaleX(0.8875);left:703.4px;transform-origin:0 0;">EA</div>
<div class="t" style="top:699px;transform:scaleX(0.8799);left:739.6px;transform-origin:0 0;">Picture name</div>
<div class="ed" style="left:811px;top:698px;width:159px;height:19px"></div>
<div class="bt" style="left:974px;top:698px;width:20px;height:16px"></div>
<div class="t" style="top:702px;transform:scaleX(0.8850);left:980.5819140625px;transform-origin:0 0;">...</div>
<div class="bt" style="left:998px;top:698px;width:20px;height:16px"></div>
<div class="t" style="top:702px;transform:scaleX(1.1000);left:1004.6px;transform-origin:0 0;">X</div>
<div class="t" style="top:675px;transform:scaleX(0.8757);left:843.6px;transform-origin:0 0;">Special systems weight</div>
<div class="sk" style="left:963px;top:674px;width:58px;height:14px"></div>
<div class="t" style="top:676px;transform:scaleX(0.9000);right:343px;transform-origin:100% 0;">8</div>
<div class="gb" style="left:686px;top:32px;width:319px;height:353px"><div></div></div>
<div class="gl" style="left:692.9px;top:28px;width:51.9px;height:10px"></div>
<div class="t" style="top:28px;transform:scaleX(0.8924);left:694.4px;transform-origin:0 0;">Main guns</div>
<div class="t" style="top:50px;transform:scaleX(0.8467);left:695.6px;transform-origin:0 0;">Calibre</div>
<div class="ed" style="left:734px;top:46px;width:46px;height:20px"></div>
<div class="bt" style="left:765px;top:48px;width:13px;height:6px"></div>
<div class="bt" style="left:765px;top:55px;width:13px;height:8px"></div>
<div class="ic" style="left:769px;top:51px"><svg width="7" height="4" viewBox="0 0 7 4" shape-rendering="crispEdges"><path d="M3 0h1v1h1v1h1v1h1v1h-7v-1h1v-1h1v-1h1z" fill="#000"/></svg></div>
<div class="ic" style="left:769px;top:58px"><svg width="7" height="4" viewBox="0 0 7 4" shape-rendering="crispEdges"><path d="M0 0h7v1h-1v1h-1v1h-1v1h-1v-1h-1v-1h-1v-1h-1z" fill="#000"/></svg></div>
<div class="t" style="top:50px;transform:scaleX(0.9000);left:738px;transform-origin:0 0;">10</div>
<div class="t" style="top:50px;transform:scaleX(0.8756);left:791.6px;transform-origin:0 0;">Quality</div>
<div class="ed" style="left:830px;top:46px;width:38px;height:20px"></div>
<div class="bt" style="left:853px;top:48px;width:13px;height:6px"></div>
<div class="bt" style="left:853px;top:55px;width:13px;height:8px"></div>
<div class="ic" style="left:857px;top:51px"><svg width="7" height="4" viewBox="0 0 7 4" shape-rendering="crispEdges"><path d="M3 0h1v1h1v1h1v1h1v1h-7v-1h1v-1h1v-1h1z" fill="#000"/></svg></div>
<div class="ic" style="left:857px;top:58px"><svg width="7" height="4" viewBox="0 0 7 4" shape-rendering="crispEdges"><path d="M0 0h7v1h-1v1h-1v1h-1v1h-1v-1h-1v-1h-1v-1h-1z" fill="#000"/></svg></div>
<div class="t" style="top:50px;transform:scaleX(0.9000);left:834px;transform-origin:0 0;color:#808080;">0</div>
<div class="bt" style="left:902px;top:47px;width:55px;height:15px"></div>
<div class="t" style="top:49px;transform:scaleX(0.8998);left:908.3px;transform-origin:0 0;">Gun data</div>
<div class="ed" style="left:694px;top:75px;width:302px;height:151px"></div>
<div class="bt" style="left:696px;top:77px;width:147px;height:14px"></div>
<div class="t" style="top:80px;transform:scaleX(0.8761);left:702.4px;transform-origin:0 0;">Position</div>
<div class="bt" style="left:845px;top:77px;width:69px;height:14px"></div>
<div class="t" style="top:80px;transform:scaleX(0.9067);left:852.6px;transform-origin:0 0;">Guns/turret</div>
<div class="bt" style="left:916px;top:77px;width:73px;height:14px"></div>
<div class="t" style="top:80px;transform:scaleX(0.9320);left:922px;transform-origin:0 0;">Weight/turret</div>
<div class="bt" style="left:991px;top:77px;width:4px;height:14px;border-right:0;box-shadow:inset 0 -1px 0 #a0a0a0"></div>
<div class="t" style="top:97px;transform:scaleX(0.8885);left:700px;transform-origin:0 0;">A - Forward</div>
<div class="t" style="top:97px;transform:scaleX(0.9000);left:853px;transform-origin:0 0;">4</div>
<div class="t" style="top:97px;transform:scaleX(0.9000);left:922.6px;transform-origin:0 0;">803</div>
<div class="t" style="top:111px;transform:scaleX(0.8693);left:700px;transform-origin:0 0;">B - Forward superimposed</div>
<div class="t" style="top:111px;transform:scaleX(0.9000);left:853px;transform-origin:0 0;">3</div>
<div class="t" style="top:111px;transform:scaleX(0.9000);left:922.6px;transform-origin:0 0;">810</div>
<div class="bt" style="left:694px;top:235px;width:63px;height:15px"></div>
<div class="t" style="top:237px;transform:scaleX(0.8885);left:703.1px;transform-origin:0 0;">Add turret</div>
<div class="bt" style="left:774px;top:235px;width:63px;height:15px"></div>
<div class="t" style="top:237px;transform:scaleX(0.8846);left:777.3px;transform-origin:0 0;">Delete turret</div>
<div class="bt" style="left:854px;top:235px;width:63px;height:15px"></div>
<div class="t" style="top:237px;transform:scaleX(0.8513);left:858.4px;transform-origin:0 0;">Clear turrets</div>
<div class="bt" style="left:934px;top:235px;width:63px;height:15px"></div>
<div class="t" style="top:238px;transform:scaleX(0.8850);left:946.5365625px;transform-origin:0 0;color:#fff;">Rebuild?</div>
<div class="t" style="top:237px;transform:scaleX(0.8850);left:945.5365625px;transform-origin:0 0;color:#a0a0a0;">Rebuild?</div>
<div class="t" style="top:264px;transform:scaleX(0.8949);left:695px;transform-origin:0 0;">Rounds per gun</div>
<div class="ed" style="left:782px;top:259px;width:46px;height:20px"></div>
<div class="bt" style="left:813px;top:261px;width:13px;height:6px"></div>
<div class="bt" style="left:813px;top:268px;width:13px;height:8px"></div>
<div class="ic" style="left:817px;top:264px"><svg width="7" height="4" viewBox="0 0 7 4" shape-rendering="crispEdges"><path d="M3 0h1v1h1v1h1v1h1v1h-7v-1h1v-1h1v-1h1z" fill="#000"/></svg></div>
<div class="ic" style="left:817px;top:271px"><svg width="7" height="4" viewBox="0 0 7 4" shape-rendering="crispEdges"><path d="M0 0h7v1h-1v1h-1v1h-1v1h-1v-1h-1v-1h-1v-1h-1z" fill="#000"/></svg></div>
<div class="t" style="top:263px;transform:scaleX(0.9000);left:786px;transform-origin:0 0;">130</div>
<div class="t" style="top:265px;transform:scaleX(0.8730);left:841.6px;transform-origin:0 0;">ammo weight</div>
<div class="sk" style="left:918px;top:263px;width:47px;height:14px"></div>
<div class="t" style="top:266px;transform:scaleX(0.9000);right:399px;transform-origin:100% 0;">449</div>
<div class="t" style="top:293px;transform:scaleX(0.8798);left:695px;transform-origin:0 0;">Fire control</div>
<div class="ed" style="left:754px;top:289px;width:127px;height:19px"></div>
<div class="bt" style="left:864px;top:291px;width:15px;height:15px"></div>
<div class="ic" style="left:869px;top:298px"><svg width="7" height="4" viewBox="0 0 7 4" shape-rendering="crispEdges"><path d="M0 0h7v1h-1v1h-1v1h-1v1h-1v-1h-1v-1h-1v-1h-1z" fill="#000"/></svg></div>
<div class="t" style="top:294px;transform:scaleX(0.8854);left:758px;transform-origin:0 0;">Director</div>
<div class="t" style="top:291px;transform:scaleX(0.8557);left:895.6px;transform-origin:0 0;">FC Positions</div>
<div class="ed" style="left:958px;top:287px;width:38px;height:20px"></div>
<div class="bt" style="left:981px;top:289px;width:13px;height:6px"></div>
<div class="bt" style="left:981px;top:296px;width:13px;height:8px"></div>
<div class="ic" style="left:985px;top:292px"><svg width="7" height="4" viewBox="0 0 7 4" shape-rendering="crispEdges"><path d="M3 0h1v1h1v1h1v1h1v1h-7v-1h1v-1h1v-1h1z" fill="#000"/></svg></div>
<div class="ic" style="left:985px;top:299px"><svg width="7" height="4" viewBox="0 0 7 4" shape-rendering="crispEdges"><path d="M0 0h7v1h-1v1h-1v1h-1v1h-1v-1h-1v-1h-1v-1h-1z" fill="#000"/></svg></div>
<div class="t" style="top:291px;transform:scaleX(0.9000);left:962px;transform-origin:0 0;">2</div>
<div class="t" style="top:317px;transform:scaleX(0.8850);left:696.4px;transform-origin:0 0;">weight</div>
<div class="sk" style="left:756px;top:316px;width:39px;height:14px"></div>
<div class="t" style="top:318px;transform:scaleX(0.9000);right:569px;transform-origin:100% 0;">51</div>
<div class="t" style="top:317px;transform:scaleX(0.8850);left:808.6px;transform-origin:0 0;">cost</div>
<div class="sk" style="left:838px;top:316px;width:39px;height:14px"></div>
<div class="t" style="top:318px;transform:scaleX(0.9000);right:487px;transform-origin:100% 0;">900</div>
<div class="ed" style="left:702px;top:345px;width:11px;height:11px;background:#fff"></div>
<div class="ic" style="left:705px;top:348px"><svg width="7" height="7" viewBox="0 0 7 7" shape-rendering="crispEdges"><path d="M0 2h1v1h1v1h1v-1h1v-1h1v-1h1v-1h1v3h-1v1h-1v1h-1v1h-1v1h-1v-1h-1v-1h-1z" fill="#000"/></svg></div>
<div class="t" style="top:346px;transform:scaleX(0.8958);left:720.6px;transform-origin:0 0;">Increased elevation</div>
<div class="ed" style="left:838px;top:347px;width:11px;height:11px;background:#f0f0f0"></div>
<div class="t" style="top:347px;transform:scaleX(0.8850);left:856.4px;transform-origin:0 0;color:#a0a0a0;">DP</div>
<div class="ed" style="left:702px;top:367px;width:11px;height:11px;background:#fff"></div>
<div class="t" style="top:367px;transform:scaleX(0.8850);left:720.6px;transform-origin:0 0;">Cross deck fire</div>
<div class="ed" style="left:838px;top:367px;width:11px;height:11px;background:#f0f0f0"></div>
<div class="t" style="top:367px;transform:scaleX(0.8926);left:856px;transform-origin:0 0;color:#a0a0a0;">Autoloader</div>
<div class="gb" style="left:686px;top:403px;width:319px;height:102px"><div></div></div>
<div class="gl" style="left:692.9px;top:399px;width:79.9px;height:10px"></div>
<div class="t" style="top:399px;transform:scaleX(0.8927);left:694.4px;transform-origin:0 0;">Secondary guns</div>
<div class="t" style="top:422px;transform:scaleX(0.8467);left:694.4px;transform-origin:0 0;">Calibre</div>
<div class="ed" style="left:742px;top:417px;width:46px;height:20px"></div>
<div class="bt" style="left:773px;top:419px;width:13px;height:6px"></div>
<div class="bt" style="left:773px;top:426px;width:13px;height:8px"></div>
<div class="ic" style="left:777px;top:422px"><svg width="7" height="4" viewBox="0 0 7 4" shape-rendering="crispEdges"><path d="M3 0h1v1h1v1h1v1h1v1h-7v-1h1v-1h1v-1h1z" fill="#000"/></svg></div>
<div class="ic" style="left:777px;top:429px"><svg width="7" height="4" viewBox="0 0 7 4" shape-rendering="crispEdges"><path d="M0 0h7v1h-1v1h-1v1h-1v1h-1v-1h-1v-1h-1v-1h-1z" fill="#000"/></svg></div>
<div class="t" style="top:421px;transform:scaleX(0.9000);left:746px;transform-origin:0 0;">6</div>
<div class="t" style="top:422px;transform:scaleX(0.8850);left:802.4px;transform-origin:0 0;">Number</div>
<div class="ed" style="left:846px;top:416px;width:46px;height:20px"></div>
<div class="bt" style="left:877px;top:418px;width:13px;height:6px"></div>
<div class="bt" style="left:877px;top:425px;width:13px;height:8px"></div>
<div class="ic" style="left:881px;top:421px"><svg width="7" height="4" viewBox="0 0 7 4" shape-rendering="crispEdges"><path d="M3 0h1v1h1v1h1v1h1v1h-7v-1h1v-1h1v-1h1z" fill="#000"/></svg></div>
<div class="ic" style="left:881px;top:428px"><svg width="7" height="4" viewBox="0 0 7 4" shape-rendering="crispEdges"><path d="M0 0h7v1h-1v1h-1v1h-1v1h-1v-1h-1v-1h-1v-1h-1z" fill="#000"/></svg></div>
<div class="t" style="top:420px;transform:scaleX(0.9000);left:850px;transform-origin:0 0;">10</div>
<div class="t" style="top:421px;transform:scaleX(0.8756);left:903.6px;transform-origin:0 0;">Quality</div>
<div class="ed" style="left:942px;top:417px;width:38px;height:20px"></div>
<div class="bt" style="left:965px;top:419px;width:13px;height:6px"></div>
<div class="bt" style="left:965px;top:426px;width:13px;height:8px"></div>
<div class="ic" style="left:969px;top:422px"><svg width="7" height="4" viewBox="0 0 7 4" shape-rendering="crispEdges"><path d="M3 0h1v1h1v1h1v1h1v1h-7v-1h1v-1h1v-1h1z" fill="#000"/></svg></div>
<div class="ic" style="left:969px;top:429px"><svg width="7" height="4" viewBox="0 0 7 4" shape-rendering="crispEdges"><path d="M0 0h7v1h-1v1h-1v1h-1v1h-1v-1h-1v-1h-1v-1h-1z" fill="#000"/></svg></div>
<div class="t" style="top:421px;transform:scaleX(0.9000);left:946px;transform-origin:0 0;color:#808080;">1</div>
<div class="t" style="top:451px;transform:scaleX(0.8850);left:694.4px;transform-origin:0 0;">Guns / turret</div>
<div class="ed" style="left:758px;top:450px;width:71px;height:19px"></div>
<div class="bt" style="left:812px;top:452px;width:15px;height:15px"></div>
<div class="ic" style="left:817px;top:459px"><svg width="7" height="4" viewBox="0 0 7 4" shape-rendering="crispEdges"><path d="M0 0h7v1h-1v1h-1v1h-1v1h-1v-1h-1v-1h-1v-1h-1z" fill="#000"/></svg></div>
<div class="t" style="top:455px;transform:scaleX(0.8850);left:762px;transform-origin:0 0;">1</div>
<div class="t" style="top:454px;transform:scaleX(0.9535);left:839px;transform-origin:0 0;">Weight</div>
<div class="sk" style="left:881px;top:452px;width:42px;height:14px"></div>
<div class="t" style="top:454px;transform:scaleX(0.9000);right:441px;transform-origin:100% 0;">351</div>
<div class="ed" style="left:694px;top:482px;width:11px;height:11px;background:#fff"></div>
<div class="ic" style="left:697px;top:485px"><svg width="7" height="7" viewBox="0 0 7 7" shape-rendering="crispEdges"><path d="M0 2h1v1h1v1h1v-1h1v-1h1v-1h1v-1h1v3h-1v1h-1v1h-1v1h-1v1h-1v-1h-1v-1h-1z" fill="#000"/></svg></div>
<div class="t" style="top:482px;transform:scaleX(0.8854);left:712.6px;transform-origin:0 0;">Director</div>
<div class="ed" style="left:758px;top:482px;width:11px;height:11px;background:#f0f0f0"></div>
<div class="t" style="top:482px;transform:scaleX(0.8850);left:776.4px;transform-origin:0 0;color:#a0a0a0;">DP</div>
<div class="ed" style="left:806px;top:482px;width:11px;height:11px;background:#f0f0f0"></div>
<div class="t" style="top:482px;transform:scaleX(0.8926);left:824px;transform-origin:0 0;color:#a0a0a0;">Autoloader</div>
<div class="gb" style="left:686px;top:524px;width:319px;height:101px"><div></div></div>
<div class="gl" style="left:693.5px;top:520px;width:63.3px;height:10px"></div>
<div class="t" style="top:520px;transform:scaleX(0.8852);left:695px;transform-origin:0 0;">Tertiary guns</div>
<div class="t" style="top:543px;transform:scaleX(0.8467);left:696.4px;transform-origin:0 0;">Calibre</div>
<div class="ed" style="left:742px;top:538px;width:46px;height:20px"></div>
<div class="bt" style="left:773px;top:540px;width:13px;height:6px"></div>
<div class="bt" style="left:773px;top:547px;width:13px;height:8px"></div>
<div class="ic" style="left:777px;top:543px"><svg width="7" height="4" viewBox="0 0 7 4" shape-rendering="crispEdges"><path d="M3 0h1v1h1v1h1v1h1v1h-7v-1h1v-1h1v-1h1z" fill="#000"/></svg></div>
<div class="ic" style="left:777px;top:550px"><svg width="7" height="4" viewBox="0 0 7 4" shape-rendering="crispEdges"><path d="M0 0h7v1h-1v1h-1v1h-1v1h-1v-1h-1v-1h-1v-1h-1z" fill="#000"/></svg></div>
<div class="t" style="top:542px;transform:scaleX(0.9000);left:746px;transform-origin:0 0;">3</div>
<div class="t" style="top:543px;transform:scaleX(0.8850);left:802.4px;transform-origin:0 0;">Number</div>
<div class="ed" style="left:846px;top:537px;width:46px;height:20px"></div>
<div class="bt" style="left:877px;top:539px;width:13px;height:6px"></div>
<div class="bt" style="left:877px;top:546px;width:13px;height:8px"></div>
<div class="ic" style="left:881px;top:542px"><svg width="7" height="4" viewBox="0 0 7 4" shape-rendering="crispEdges"><path d="M3 0h1v1h1v1h1v1h1v1h-7v-1h1v-1h1v-1h1z" fill="#000"/></svg></div>
<div class="ic" style="left:881px;top:549px"><svg width="7" height="4" viewBox="0 0 7 4" shape-rendering="crispEdges"><path d="M0 0h7v1h-1v1h-1v1h-1v1h-1v-1h-1v-1h-1v-1h-1z" fill="#000"/></svg></div>
<div class="t" style="top:541px;transform:scaleX(0.9000);left:850px;transform-origin:0 0;">6</div>
<div class="t" style="top:542px;transform:scaleX(0.8756);left:911.6px;transform-origin:0 0;">Quality</div>
<div class="ed" style="left:950px;top:538px;width:38px;height:20px"></div>
<div class="bt" style="left:973px;top:540px;width:13px;height:6px"></div>
<div class="bt" style="left:973px;top:547px;width:13px;height:8px"></div>
<div class="ic" style="left:977px;top:543px"><svg width="7" height="4" viewBox="0 0 7 4" shape-rendering="crispEdges"><path d="M3 0h1v1h1v1h1v1h1v1h-7v-1h1v-1h1v-1h1z" fill="#000"/></svg></div>
<div class="ic" style="left:977px;top:550px"><svg width="7" height="4" viewBox="0 0 7 4" shape-rendering="crispEdges"><path d="M0 0h7v1h-1v1h-1v1h-1v1h-1v-1h-1v-1h-1v-1h-1z" fill="#000"/></svg></div>
<div class="t" style="top:542px;transform:scaleX(0.9000);left:954px;transform-origin:0 0;color:#808080;">1</div>
<div class="t" style="top:572px;transform:scaleX(0.8850);left:696.4px;transform-origin:0 0;">Guns / turret</div>
<div class="ed" style="left:766px;top:571px;width:71px;height:19px"></div>
<div class="bt" style="left:820px;top:573px;width:15px;height:15px"></div>
<div class="ic" style="left:825px;top:580px"><svg width="7" height="4" viewBox="0 0 7 4" shape-rendering="crispEdges"><path d="M0 0h7v1h-1v1h-1v1h-1v1h-1v-1h-1v-1h-1v-1h-1z" fill="#000"/></svg></div>
<div class="t" style="top:576px;transform:scaleX(0.8850);left:770px;transform-origin:0 0;">1</div>
<div class="t" style="top:575px;transform:scaleX(0.9535);left:844.4px;transform-origin:0 0;">Weight</div>
<div class="sk" style="left:883px;top:573px;width:42px;height:14px"></div>
<div class="t" style="top:575px;transform:scaleX(0.9000);right:439px;transform-origin:100% 0;">60</div>
<div class="ed" style="left:758px;top:603px;width:11px;height:11px;background:#fff"></div>
<div class="ic" style="left:761px;top:606px"><svg width="7" height="7" viewBox="0 0 7 7" shape-rendering="crispEdges"><path d="M0 2h1v1h1v1h1v-1h1v-1h1v-1h1v-1h1v3h-1v1h-1v1h-1v1h-1v1h-1v-1h-1v-1h-1z" fill="#000"/></svg></div>
<div class="t" style="top:603px;transform:scaleX(0.8850);left:776.6px;transform-origin:0 0;">DP</div>
<div class="ed" style="left:806px;top:603px;width:11px;height:11px;background:#f0f0f0"></div>
<div class="t" style="top:603px;transform:scaleX(0.8926);left:824px;transform-origin:0 0;color:#a0a0a0;">Autoloader</div>
<div class="tabpanel" style="left:1012px;top:30px;width:335px;height:619px"></div>
<div class="tab" style="left:1122px;top:12px;width:132px;height:18px"></div>
<div class="tab tabsel" style="left:1012px;top:10px;width:109px;height:21px"></div>
<div class="t" style="top:14px;transform:scaleX(0.8678);left:1020px;transform-origin:0 0;">Additional armament</div>
<div class="t" style="top:16px;transform:scaleX(0.8541);left:1127.6px;transform-origin:0 0;">Flight installations, missiles</div>
<div class="gb" style="left:1024px;top:39px;width:311px;height:210px"><div></div></div>
<div class="gl" style="left:1031.5px;top:35px;width:52.1px;height:10px"></div>
<div class="t" style="top:35px;transform:scaleX(0.8850);left:1033px;transform-origin:0 0;">Torpedoes</div>
<div class="ed" style="left:1032px;top:62px;width:295px;height:111px"></div>
<div class="bt" style="left:1034px;top:64px;width:148px;height:14px"></div>
<div class="t" style="top:67px;transform:scaleX(0.8761);left:1039.6px;transform-origin:0 0;">Position</div>
<div class="bt" style="left:1184px;top:64px;width:57px;height:14px"></div>
<div class="t" style="top:67px;transform:scaleX(0.9390);left:1190.5px;transform-origin:0 0;">Tubes/...</div>
<div class="bt" style="left:1243px;top:64px;width:79px;height:14px"></div>
<div class="t" style="top:67px;transform:scaleX(0.9458);left:1250px;transform-origin:0 0;">Weight/mount</div>
<div class="bt" style="left:1324px;top:64px;width:2px;height:14px;border-right:0;box-shadow:inset 0 -1px 0 #a0a0a0"></div>
<div class="bt" style="left:1033px;top:186px;width:70px;height:15px"></div>
<div class="t" style="top:188px;transform:scaleX(0.8850);left:1043.3280859375px;transform-origin:0 0;">Add mount</div>
<div class="bt" style="left:1144px;top:186px;width:71px;height:15px"></div>
<div class="t" style="top:188px;transform:scaleX(0.8913);left:1148.7px;transform-origin:0 0;">Delete mount</div>
<div class="bt" style="left:1248px;top:186px;width:79px;height:15px"></div>
<div class="t" style="top:188px;transform:scaleX(0.8604);left:1257.8px;transform-origin:0 0;">Clear mounts</div>
<div class="ed" style="left:1034px;top:224px;width:11px;height:11px;background:#f0f0f0"></div>
<div class="t" style="top:225px;transform:scaleX(0.8915);left:1053px;transform-origin:0 0;color:#a0a0a0;">Torpedo reloads (above water tubes)</div>
<div class="gb" style="left:1024px;top:268px;width:311px;height:133px"><div></div></div>
<div class="gl" style="left:1030.5px;top:264px;width:56.8px;height:10px"></div>
<div class="t" style="top:264px;transform:scaleX(0.8850);left:1032px;transform-origin:0 0;">Anti Aircraft</div>
<div class="t" style="top:287px;transform:scaleX(0.8850);left:1034px;transform-origin:0 0;">AA positions used: 16 of 55</div>
<div class="t" style="top:298px;transform:scaleX(0.9535);left:1221.6px;transform-origin:0 0;">Weight</div>
<div class="t" style="top:297px;transform:scaleX(0.8917);left:1276.4px;transform-origin:0 0;">Cost</div>
<div class="t" style="top:315px;transform:scaleX(0.8850);left:1032.6px;transform-origin:0 0;">Light Anti Aircraft guns</div>
<div class="ed" style="left:1160px;top:312px;width:46px;height:20px"></div>
<div class="bt" style="left:1191px;top:314px;width:13px;height:6px"></div>
<div class="bt" style="left:1191px;top:321px;width:13px;height:8px"></div>
<div class="ic" style="left:1195px;top:317px"><svg width="7" height="4" viewBox="0 0 7 4" shape-rendering="crispEdges"><path d="M3 0h1v1h1v1h1v1h1v1h-7v-1h1v-1h1v-1h1z" fill="#000"/></svg></div>
<div class="ic" style="left:1195px;top:324px"><svg width="7" height="4" viewBox="0 0 7 4" shape-rendering="crispEdges"><path d="M0 0h7v1h-1v1h-1v1h-1v1h-1v-1h-1v-1h-1v-1h-1z" fill="#000"/></svg></div>
<div class="t" style="top:315px;transform:scaleX(0.9000);left:1164px;transform-origin:0 0;">8</div>
<div class="sk" style="left:1218px;top:313px;width:45px;height:14px"></div>
<div class="t" style="top:315px;transform:scaleX(0.9000);right:101px;transform-origin:100% 0;">8</div>
<div class="sk" style="left:1272px;top:313px;width:47px;height:14px"></div>
<div class="t" style="top:315px;transform:scaleX(0.9000);right:45px;transform-origin:100% 0;">0</div>
<div class="t" style="top:346px;transform:scaleX(0.8879);left:1032.4px;transform-origin:0 0;">Medium Anti Aircraft guns</div>
<div class="ed" style="left:1160px;top:341px;width:46px;height:20px"></div>
<div class="bt" style="left:1191px;top:343px;width:13px;height:6px"></div>
<div class="bt" style="left:1191px;top:350px;width:13px;height:8px"></div>
<div class="ic" style="left:1195px;top:346px"><svg width="7" height="4" viewBox="0 0 7 4" shape-rendering="crispEdges"><path d="M3 0h1v1h1v1h1v1h1v1h-7v-1h1v-1h1v-1h1z" fill="#000"/></svg></div>
<div class="ic" style="left:1195px;top:353px"><svg width="7" height="4" viewBox="0 0 7 4" shape-rendering="crispEdges"><path d="M0 0h7v1h-1v1h-1v1h-1v1h-1v-1h-1v-1h-1v-1h-1z" fill="#000"/></svg></div>
<div class="t" style="top:345px;transform:scaleX(0.9000);left:1164px;transform-origin:0 0;color:#808080;">0</div>
<div class="sk" style="left:1218px;top:343px;width:45px;height:14px"></div>
<div class="t" style="top:345px;transform:scaleX(0.9000);right:101px;transform-origin:100% 0;">0</div>
<div class="sk" style="left:1272px;top:342px;width:47px;height:14px"></div>
<div class="t" style="top:344px;transform:scaleX(0.9000);right:45px;transform-origin:100% 0;">0</div>
<div class="t" style="top:373px;transform:scaleX(0.8873);left:1032.4px;transform-origin:0 0;">AA directors</div>
<div class="ed" style="left:1160px;top:370px;width:46px;height:20px"></div>
<div class="bt" style="left:1191px;top:372px;width:13px;height:6px"></div>
<div class="bt" style="left:1191px;top:379px;width:13px;height:8px"></div>
<div class="ic" style="left:1195px;top:375px"><svg width="7" height="4" viewBox="0 0 7 4" shape-rendering="crispEdges"><path d="M3 0h1v1h1v1h1v1h1v1h-7v-1h1v-1h1v-1h1z" fill="#000"/></svg></div>
<div class="ic" style="left:1195px;top:382px"><svg width="7" height="4" viewBox="0 0 7 4" shape-rendering="crispEdges"><path d="M0 0h7v1h-1v1h-1v1h-1v1h-1v-1h-1v-1h-1v-1h-1z" fill="#000"/></svg></div>
<div class="t" style="top:374px;transform:scaleX(0.9000);left:1164px;transform-origin:0 0;color:#808080;">0</div>
<div class="sk" style="left:1218px;top:372px;width:45px;height:14px"></div>
<div class="t" style="top:374px;transform:scaleX(0.9000);right:101px;transform-origin:100% 0;">0</div>
<div class="sk" style="left:1272px;top:372px;width:47px;height:14px"></div>
<div class="t" style="top:374px;transform:scaleX(0.9000);right:45px;transform-origin:100% 0;">0</div>
<div class="gb" style="left:1024px;top:415px;width:311px;height:80px"><div></div></div>
<div class="gl" style="left:1030.9px;top:411px;width:63.9px;height:10px"></div>
<div class="t" style="top:411px;transform:scaleX(0.8852);left:1032.4px;transform-origin:0 0;">Mine warfare</div>
<div class="t" style="top:434px;transform:scaleX(0.8788);left:1032.4px;transform-origin:0 0;">Mines (max 0)</div>
<div class="ed" style="left:1120px;top:429px;width:46px;height:20px"></div>
<div class="bt" style="left:1151px;top:431px;width:13px;height:6px"></div>
<div class="bt" style="left:1151px;top:438px;width:13px;height:8px"></div>
<div class="ic" style="left:1155px;top:434px"><svg width="7" height="4" viewBox="0 0 7 4" shape-rendering="crispEdges"><path d="M3 0h1v1h1v1h1v1h1v1h-7v-1h1v-1h1v-1h1z" fill="#000"/></svg></div>
<div class="ic" style="left:1155px;top:441px"><svg width="7" height="4" viewBox="0 0 7 4" shape-rendering="crispEdges"><path d="M0 0h7v1h-1v1h-1v1h-1v1h-1v-1h-1v-1h-1v-1h-1z" fill="#000"/></svg></div>
<div class="t" style="top:433px;transform:scaleX(0.9000);left:1124px;transform-origin:0 0;">0</div>
<div class="t" style="top:466px;transform:scaleX(0.8850);left:1034.4px;transform-origin:0 0;">Minesweeping gear</div>
<div class="ed" style="left:1148px;top:466px;width:11px;height:11px;background:#fff"></div>
<div class="sk" style="left:1186px;top:465px;width:58px;height:14px"></div>
<div class="t" style="top:467px;transform:scaleX(0.9000);right:120px;transform-origin:100% 0;">0</div>
<div class="sk" style="left:1272px;top:463px;width:47px;height:14px"></div>
<div class="t" style="top:465px;transform:scaleX(0.9000);right:45px;transform-origin:100% 0;">0</div>
<div class="gb" style="left:1024px;top:511px;width:311px;height:122px"><div></div></div>
<div class="gl" style="left:1030.5px;top:507px;width:27.3px;height:10px"></div>
<div class="t" style="top:507px;transform:scaleX(0.9075);left:1032px;transform-origin:0 0;">ASW</div>
<div class="t" style="top:522px;transform:scaleX(0.9535);left:1197px;transform-origin:0 0;">Weight</div>
<div class="t" style="top:519px;transform:scaleX(0.8917);left:1276.4px;transform-origin:0 0;">Cost</div>
<div class="t" style="top:535px;transform:scaleX(0.8733);left:1032.6px;transform-origin:0 0;">K-guns</div>
<div class="ed" style="left:1120px;top:533px;width:46px;height:20px"></div>
<div class="bt" style="left:1151px;top:535px;width:13px;height:6px"></div>
<div class="bt" style="left:1151px;top:542px;width:13px;height:8px"></div>
<div class="ic" style="left:1155px;top:538px"><svg width="7" height="4" viewBox="0 0 7 4" shape-rendering="crispEdges"><path d="M3 0h1v1h1v1h1v1h1v1h-7v-1h1v-1h1v-1h1z" fill="#000"/></svg></div>
<div class="ic" style="left:1155px;top:545px"><svg width="7" height="4" viewBox="0 0 7 4" shape-rendering="crispEdges"><path d="M0 0h7v1h-1v1h-1v1h-1v1h-1v-1h-1v-1h-1v-1h-1z" fill="#000"/></svg></div>
<div class="t" style="top:537px;transform:scaleX(0.9000);left:1124px;transform-origin:0 0;color:#808080;">0</div>
<div class="sk" style="left:1186px;top:537px;width:58px;height:14px"></div>
<div class="t" style="top:539px;transform:scaleX(0.9000);right:120px;transform-origin:100% 0;">0</div>
<div class="sk" style="left:1272px;top:535px;width:47px;height:14px"></div>
<div class="t" style="top:537px;transform:scaleX(0.9000);right:45px;transform-origin:100% 0;">0</div>
<div class="t" style="top:568px;transform:scaleX(0.8784);left:1034.4px;transform-origin:0 0;color:#a0a0a0;">Forward ASW mortar</div>
<div class="ed" style="left:1148px;top:568px;width:11px;height:11px;background:#f0f0f0"></div>
<div class="sk" style="left:1186px;top:569px;width:58px;height:14px"></div>
<div class="t" style="top:571px;transform:scaleX(0.9000);right:120px;transform-origin:100% 0;">0</div>
<div class="sk" style="left:1272px;top:567px;width:47px;height:14px"></div>
<div class="t" style="top:569px;transform:scaleX(0.9000);right:45px;transform-origin:100% 0;">0</div>
<div class="t" style="top:600px;transform:scaleX(0.8860);left:1034.4px;transform-origin:0 0;color:#a0a0a0;">Increased DC storage</div>
<div class="ed" style="left:1148px;top:600px;width:11px;height:11px;background:#f0f0f0"></div>
<div class="sk" style="left:1186px;top:601px;width:58px;height:14px"></div>
<div class="t" style="top:603px;transform:scaleX(0.9000);right:120px;transform-origin:100% 0;">0</div>
<div class="sk" style="left:1272px;top:599px;width:47px;height:14px"></div>
<div class="t" style="top:601px;transform:scaleX(0.9000);right:45px;transform-origin:100% 0;">0</div>
</body></html>
